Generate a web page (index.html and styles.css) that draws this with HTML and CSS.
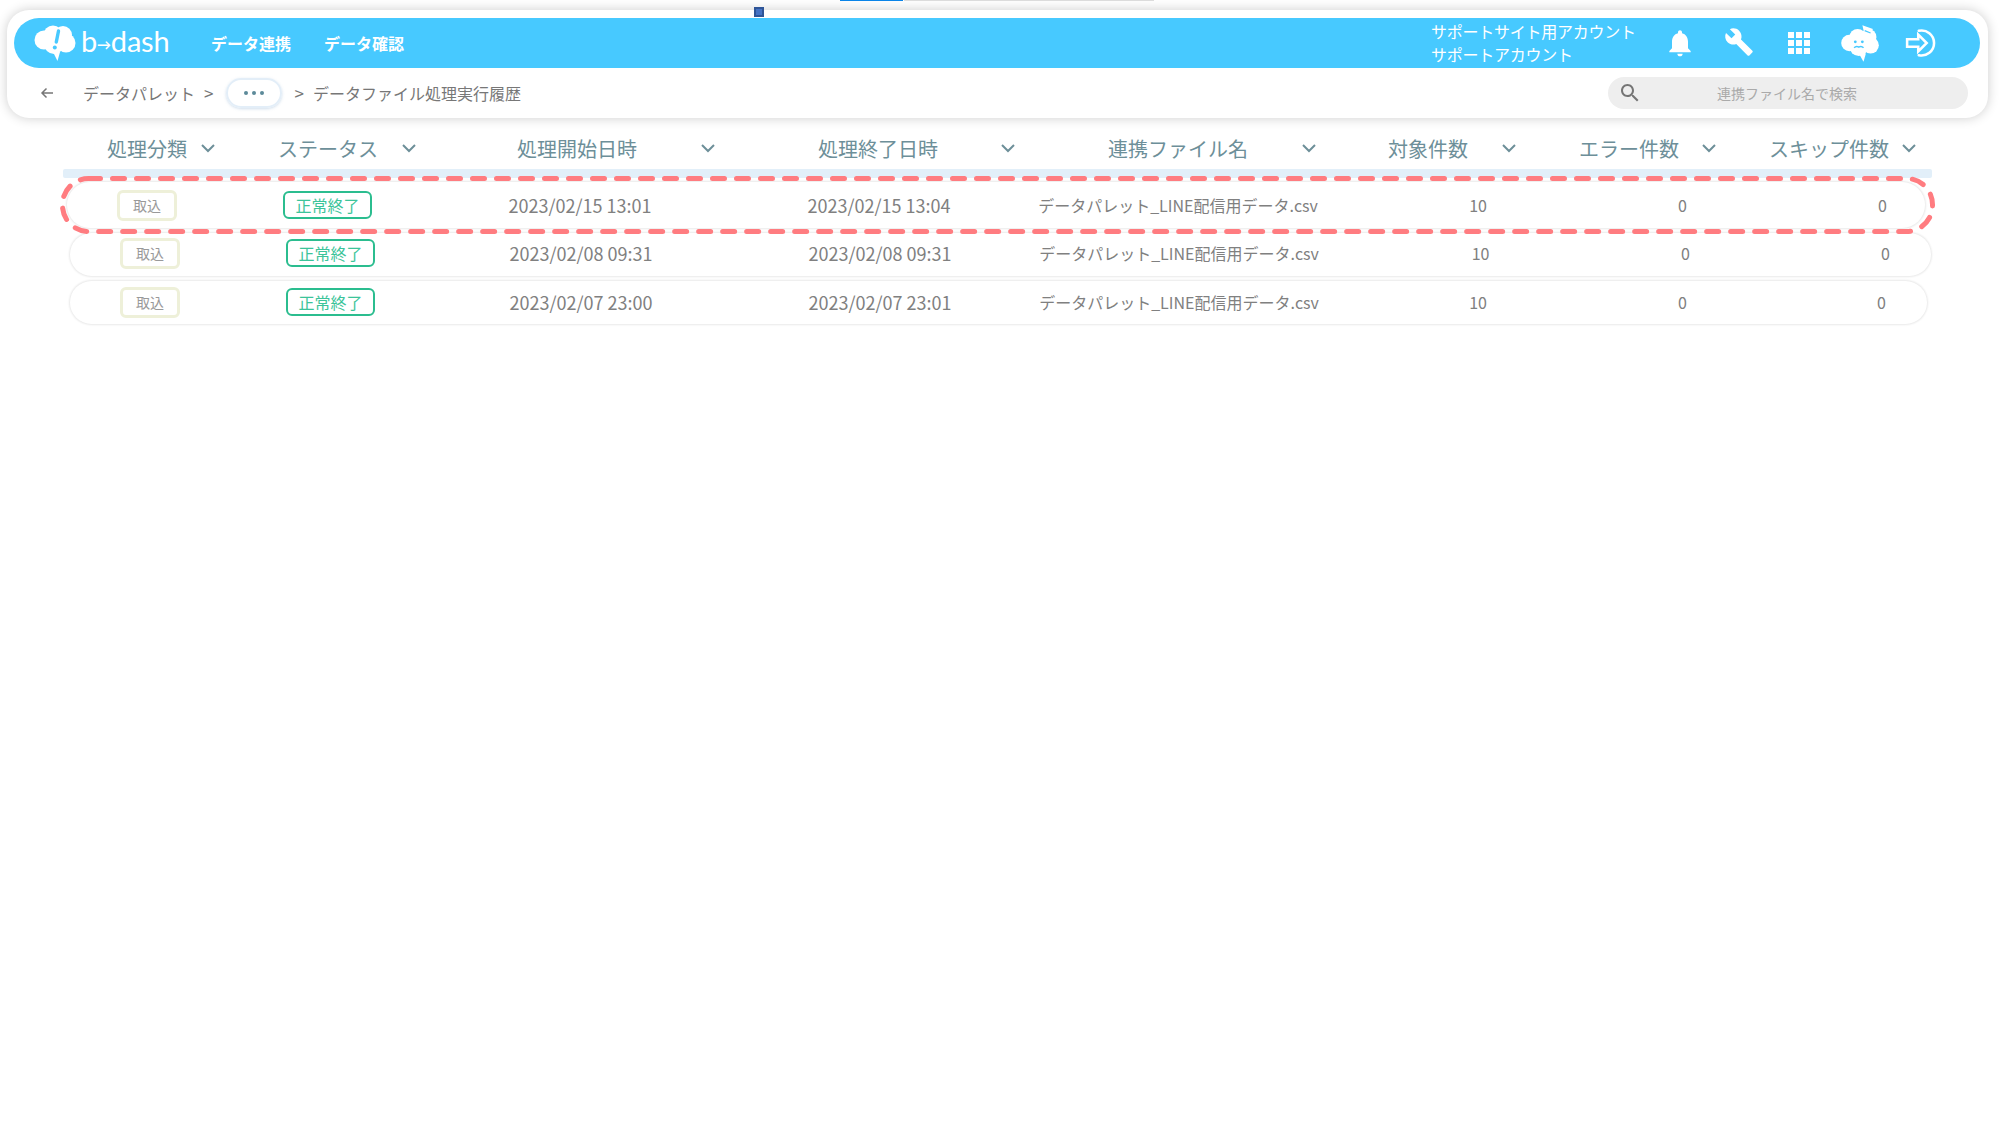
FILE: index.html
```html
<!DOCTYPE html>
<html lang="ja">
<head>
<meta charset="utf-8">
<title>データファイル処理実行履歴</title>
<link rel="stylesheet" href="styles.css">
</head>
<body>
<div class="tick tick-blue"></div>
<div class="tick tick-grey"></div>
<div class="handle"></div>
<div class="card">
  <header class="bar">
    <div class="logo">
      <svg class="logo-mark" viewBox="0 0 42 36">
        <g fill="#fff"><circle cx="10" cy="15" r="9.500"/><circle cx="19" cy="10" r="9.500"/><circle cx="29" cy="10" r="9"/><circle cx="32" cy="18" r="9.500"/><circle cx="20" cy="19" r="10"/><path d="M19 27l7 0-2.500 9z"/></g>
        <path d="M24.500 6l-2.200 11" stroke="#47c9ff" stroke-width="3.400" stroke-linecap="round"/><circle cx="20.800" cy="22.500" r="2" fill="#47c9ff"/>
      </svg>
      <span class="logo-text">b<span class="logo-arrow">→</span>dash</span>
    </div>
    <nav class="nav"><span>データ連携</span><span>データ確認</span></nav>
    <div class="account"><div>サポートサイト用アカウント</div><div>サポートアカウント</div></div>
    <div class="tools">
      <svg class="tool" viewBox="0 0 24 24"><path fill="#fff" d="M12 22c1.100 0 2-.9 2-2h-4c0 1.100.89 2 2 2zm6-6v-5c0-3.070-1.640-5.640-4.500-6.320V4c0-.83-.67-1.500-1.500-1.500s-1.500.67-1.500 1.500v.68C7.630 5.360 6 7.920 6 11v5l-2 2v1h16v-1l-2-2z"/></svg>
      <svg class="tool tool-wrench" viewBox="0 0 24 24"><path fill="#fff" d="M22.700 19l-9.100-9.100c.9-2.300.4-5-1.500-6.900-2-2-5-2.400-7.400-1.300L9 6 6 9 1.600 4.700C.4 7.100.9 10.100 2.900 12.100c1.900 1.900 4.600 2.400 6.900 1.500l9.100 9.100c.4.4 1 .4 1.400 0l2.300-2.300c.5-.4.5-1.100.1-1.400z"/></svg>
      <svg class="tool tool-grid" viewBox="0 0 22 22"><path fill="#fff" d="M0 6h6V0H0zm8 0h6V0H8zm8 0h6V0h-6zM0 14h6V8H0zm8 0h6V8H8zm8 0h6V8h-6zM0 22h6v-6H0zm8 0h6v-6H8zm8 0h6v-6h-6z"/></svg>
      <svg class="tool tool-mascot" viewBox="0 0 34 34">
        <g fill="#fff"><circle cx="8" cy="17" r="7"/><circle cx="15" cy="12" r="7"/><circle cx="24" cy="12" r="7"/><circle cx="26" cy="19" r="7"/><circle cx="16" cy="20" r="8"/><path d="M16 26l6 0-2 7z"/><path d="M19 2l9 3-2 4-6-3z"/></g>
        <path d="M21 6.500l5 2" stroke="#47c9ff" stroke-width="1"/>
        <circle cx="13" cy="16" r="1.200" fill="#47c9ff"/><circle cx="19" cy="16" r="1.200" fill="#47c9ff"/>
        <path d="M12 21c2-2 3-1 4-.5 1-.5 2-1.500 4 .5" fill="none" stroke="#47c9ff" stroke-width="1.300"/>
      </svg>
      <svg class="tool tool-login" viewBox="0 0 34 30">
        <path d="M13 3.500a11.800 11.800 0 1 1 0 23" fill="none" stroke="#fff" stroke-width="2.400" stroke-linecap="round"/>
        <path d="M2 11.500h10.500V7l8 8-8 8v-4.500H2z" fill="none" stroke="#fff" stroke-width="2.400" stroke-linejoin="miter"/>
      </svg>
    </div>
  </header>
  <div class="crumbs">
    <svg class="back" viewBox="0 0 16 16"><path d="M14 8H3M7.500 3.500L3 8l4.500 4.500" fill="none" stroke="#777" stroke-width="1.500"/></svg>
    <span class="crumb-root">データパレット</span>
    <span class="sep">&gt;</span>
    <span class="more"><i></i><i></i><i></i></span>
    <span class="sep">&gt;</span>
    <span class="crumb-here">データファイル処理実行履歴</span>
    <div class="search">
      <svg class="search-icon" viewBox="0 0 24 24"><path fill="#757575" d="M15.500 14h-.79l-.28-.27C15.410 12.590 16 11.110 16 9.500 16 5.910 13.090 3 9.500 3S3 5.910 3 9.500 5.910 16 9.500 16c1.610 0 3.090-.59 4.230-1.570l.27.28v.79l5 4.990L20.490 19l-4.990-5zm-6 0C7.010 14 5 11.990 5 9.500S7.010 5 9.500 5 14 7.010 14 9.500 11.990 14 9.500 14z"/></svg>
      <span class="search-text">連携ファイル名で検索</span>
    </div>
  </div>
</div>

<main class="table">
  <div class="head">
    <div class="hc"><span>処理分類</span><svg class="chev" viewBox="0 0 14 9"><path d="M1 1l6 6 6-6"/></svg></div>
    <div class="hc"><span>ステータス</span><svg class="chev" viewBox="0 0 14 9"><path d="M1 1l6 6 6-6"/></svg></div>
    <div class="hc"><span>処理開始日時</span><svg class="chev" viewBox="0 0 14 9"><path d="M1 1l6 6 6-6"/></svg></div>
    <div class="hc"><span>処理終了日時</span><svg class="chev" viewBox="0 0 14 9"><path d="M1 1l6 6 6-6"/></svg></div>
    <div class="hc"><span>連携ファイル名</span><svg class="chev" viewBox="0 0 14 9"><path d="M1 1l6 6 6-6"/></svg></div>
    <div class="hc"><span>対象件数</span><svg class="chev" viewBox="0 0 14 9"><path d="M1 1l6 6 6-6"/></svg></div>
    <div class="hc"><span>エラー件数</span><svg class="chev" viewBox="0 0 14 9"><path d="M1 1l6 6 6-6"/></svg></div>
    <div class="hc"><span>スキップ件数</span><svg class="chev" viewBox="0 0 14 9"><path d="M1 1l6 6 6-6"/></svg></div>
  </div>
  <div class="rule"></div>

  <div class="row row-1">
    <div class="c"><span class="kind">取込</span></div>
    <div class="c"><span class="status">正常終了</span></div>
    <div class="c d">2023/02/15 13:01</div>
    <div class="c d">2023/02/15 13:04</div>
    <div class="c">データパレット_LINE配信用データ.csv</div>
    <div class="c n">10</div>
    <div class="c n">0</div>
    <div class="c n">0</div>
  </div>
  <div class="row row-2">
    <div class="c"><span class="kind">取込</span></div>
    <div class="c"><span class="status">正常終了</span></div>
    <div class="c d">2023/02/08 09:31</div>
    <div class="c d">2023/02/08 09:31</div>
    <div class="c">データパレット_LINE配信用データ.csv</div>
    <div class="c n">10</div>
    <div class="c n">0</div>
    <div class="c n">0</div>
  </div>
  <div class="row row-3">
    <div class="c"><span class="kind">取込</span></div>
    <div class="c"><span class="status">正常終了</span></div>
    <div class="c d">2023/02/07 23:00</div>
    <div class="c d">2023/02/07 23:01</div>
    <div class="c">データパレット_LINE配信用データ.csv</div>
    <div class="c n">10</div>
    <div class="c n">0</div>
    <div class="c n">0</div>
  </div>
</main>

<svg class="callout" viewBox="0 0 1880 60" width="1880" height="60">
  <rect x="3.500" y="3.500" width="1870" height="53" rx="26" ry="26" fill="none" stroke="#ff7c80" stroke-width="5" stroke-dasharray="12 12" stroke-linecap="round"/>
</svg>
</body>
</html>
```
FILE: styles.css
```css
* { box-sizing: border-box; }
html, body { margin: 0; padding: 0; }
body {
  position: relative;
  width: 2000px;
  height: 1125px;
  overflow: hidden;
  background: #fff;
  padding-top: 10px;
  font-family: "Noto Sans CJK JP", "Noto Sans", sans-serif;
  color: #7d7d7d;
}
.tick { position: absolute; top: 0; height: 1px; }
.tick-blue { left: 840px; width: 63px; background: #0a84e8; }
.tick-grey { left: 904px; width: 250px; background: #dcdcdc; }
.handle {
  position: absolute; left: 754px; top: 7px; width: 10px; height: 10px;
  background: #4472c4; border: 2px solid #2f5597; z-index: 2;
}
.card {
  width: 1981px;
  height: 108px;
  margin-left: 7px;
  padding: 8px 8px 0 7px;
  background: #fff;
  border-radius: 22px;
  box-shadow: 0 0 12px rgba(0, 0, 0, .2);
}
.bar {
  display: flex;
  align-items: center;
  height: 50px;
  padding-left: 20px;
  background: #47c9ff;
  border-radius: 25px;
  color: #fff;
}
.logo { display: flex; align-items: center; width: 177px; }
.logo-mark { width: 42px; height: 36px; display: block; }
.logo-text {
  margin-left: 5px;
  font-family: Lato, sans-serif;
  font-size: 29px;
  line-height: 36px;
  letter-spacing: -.2px;
}
.logo-arrow { font-size: 14px; font-weight: 700; vertical-align: 2px; }
.nav { display: flex; gap: 33px; font-size: 16px; font-weight: 700; margin-top: -1px; }
.account { margin-left: 1027px; width: 233px; font-size: 16px; line-height: 23px; margin-top: -1px; letter-spacing: -.25px; }
.tools { display: flex; align-items: center; }
.tool { width: 32px; height: 32px; margin-right: 28px; display: block; }
.tool-wrench { width: 30px; height: 30px; margin-right: 34px; margin-top: -3px; }
.tool-grid { width: 22px; height: 22px; margin-right: 30px; }
.tool-mascot { width: 40px; height: 40px; margin-right: 25px; }
.tool-login { width: 36px; height: 32px; margin-right: 0; }
.crumbs { display: flex; align-items: center; height: 50px; padding-bottom: 1px; font-size: 16px; color: #777; }
.back { width: 16px; height: 16px; margin-left: 25px; }
.crumb-root { margin-left: 28px; }
.sep { margin: 0 13px 0 9px; color: #777; font-size: 17px; }
.more {
  display: flex; align-items: center; justify-content: center; gap: 4px;
  width: 56px; height: 30px;
  border: 2px solid #e3eef8; border-radius: 15px; box-shadow: 0 1px 3px rgba(120, 160, 200, .35);
}
.more i { width: 4px; height: 4px; border-radius: 50%; background: #5c8a99; }
.crumbs .more + .sep { margin-left: 12px; margin-right: 9px; }
.crumb-here { color: #777; }
.search {
  display: flex; align-items: center;
  width: 360px; height: 32px; margin-left: auto; margin-right: 12px;
  background: #eee; border-radius: 16px; padding-left: 10px;
}
.search-icon { width: 24px; height: 24px; }
.search-text { margin-left: 75px; font-size: 14px; color: #aaa; }

.head {
  display: grid;
  grid-template-columns: 171px 239px 301px 290px 280px 191px 190px 160px;
  align-items: center;
  height: 51px;
  padding-left: 107px;
  padding-top: 10px;
  font-size: 20px;
  color: #6d8f99;
  white-space: nowrap;
}
.hc { display: flex; align-items: center; }
.hc:nth-child(1) { gap: 14px; }
.hc:nth-child(2) { gap: 24px; }
.hc:nth-child(3) { gap: 64px; }
.hc:nth-child(4) { gap: 63px; }
.hc:nth-child(5) { gap: 54px; }
.hc:nth-child(6) { gap: 34px; }
.hc:nth-child(7) { gap: 23px; }
.hc:nth-child(8) { gap: 13px; }
.chev { width: 14px; height: 9px; flex: none; fill: none; stroke: #6d8f99; stroke-width: 2; }
.rule { height: 9px; width: 1869px; margin-left: 63px; background: #e2eff9; border-radius: 2px; }
.row {
  display: grid;
  align-items: center;
  background: #fff;
  border-radius: 23px;
  box-shadow: 0 0 2px 1px rgba(0, 0, 0, .09);
  font-size: 16px;
  color: #808080;
}
.row-1 {
  width: 1858px; height: 46px; margin: 4px 0 0 67px;
  grid-template-columns: 160px 201px 304px 294px 304px 157px 200px 200px;
}
.row-2 {
  width: 1861px; height: 43px; margin: 5px 0 0 70px; padding-bottom: 3px;
  grid-template-columns: 160px 201px 300px 298px 300px 160.500px 200.500px 200px;
}
.row-3 {
  width: 1857px; height: 43px; margin: 5px 0 0 70px; padding-bottom: 1px;
  grid-template-columns: 160px 201px 300px 298px 300px 158px 200px 199px;
}
.c { text-align: center; white-space: nowrap; }
.d { font-size: 18px; }
.n { text-align: right; }
.kind {
  display: inline-flex; align-items: center; justify-content: center;
  width: 60px; height: 31px;
  border: 3px solid #eef0d9; border-radius: 6px;
  font-size: 14px; color: #999;
}
.status {
  display: inline-flex; align-items: center; justify-content: center;
  width: 89px; height: 28px;
  border: 2px solid #2bbd8f; border-radius: 6px;
  font-size: 16px; color: #3cc49a;
}
.callout { position: absolute; left: 59px; top: 175px; }
```
